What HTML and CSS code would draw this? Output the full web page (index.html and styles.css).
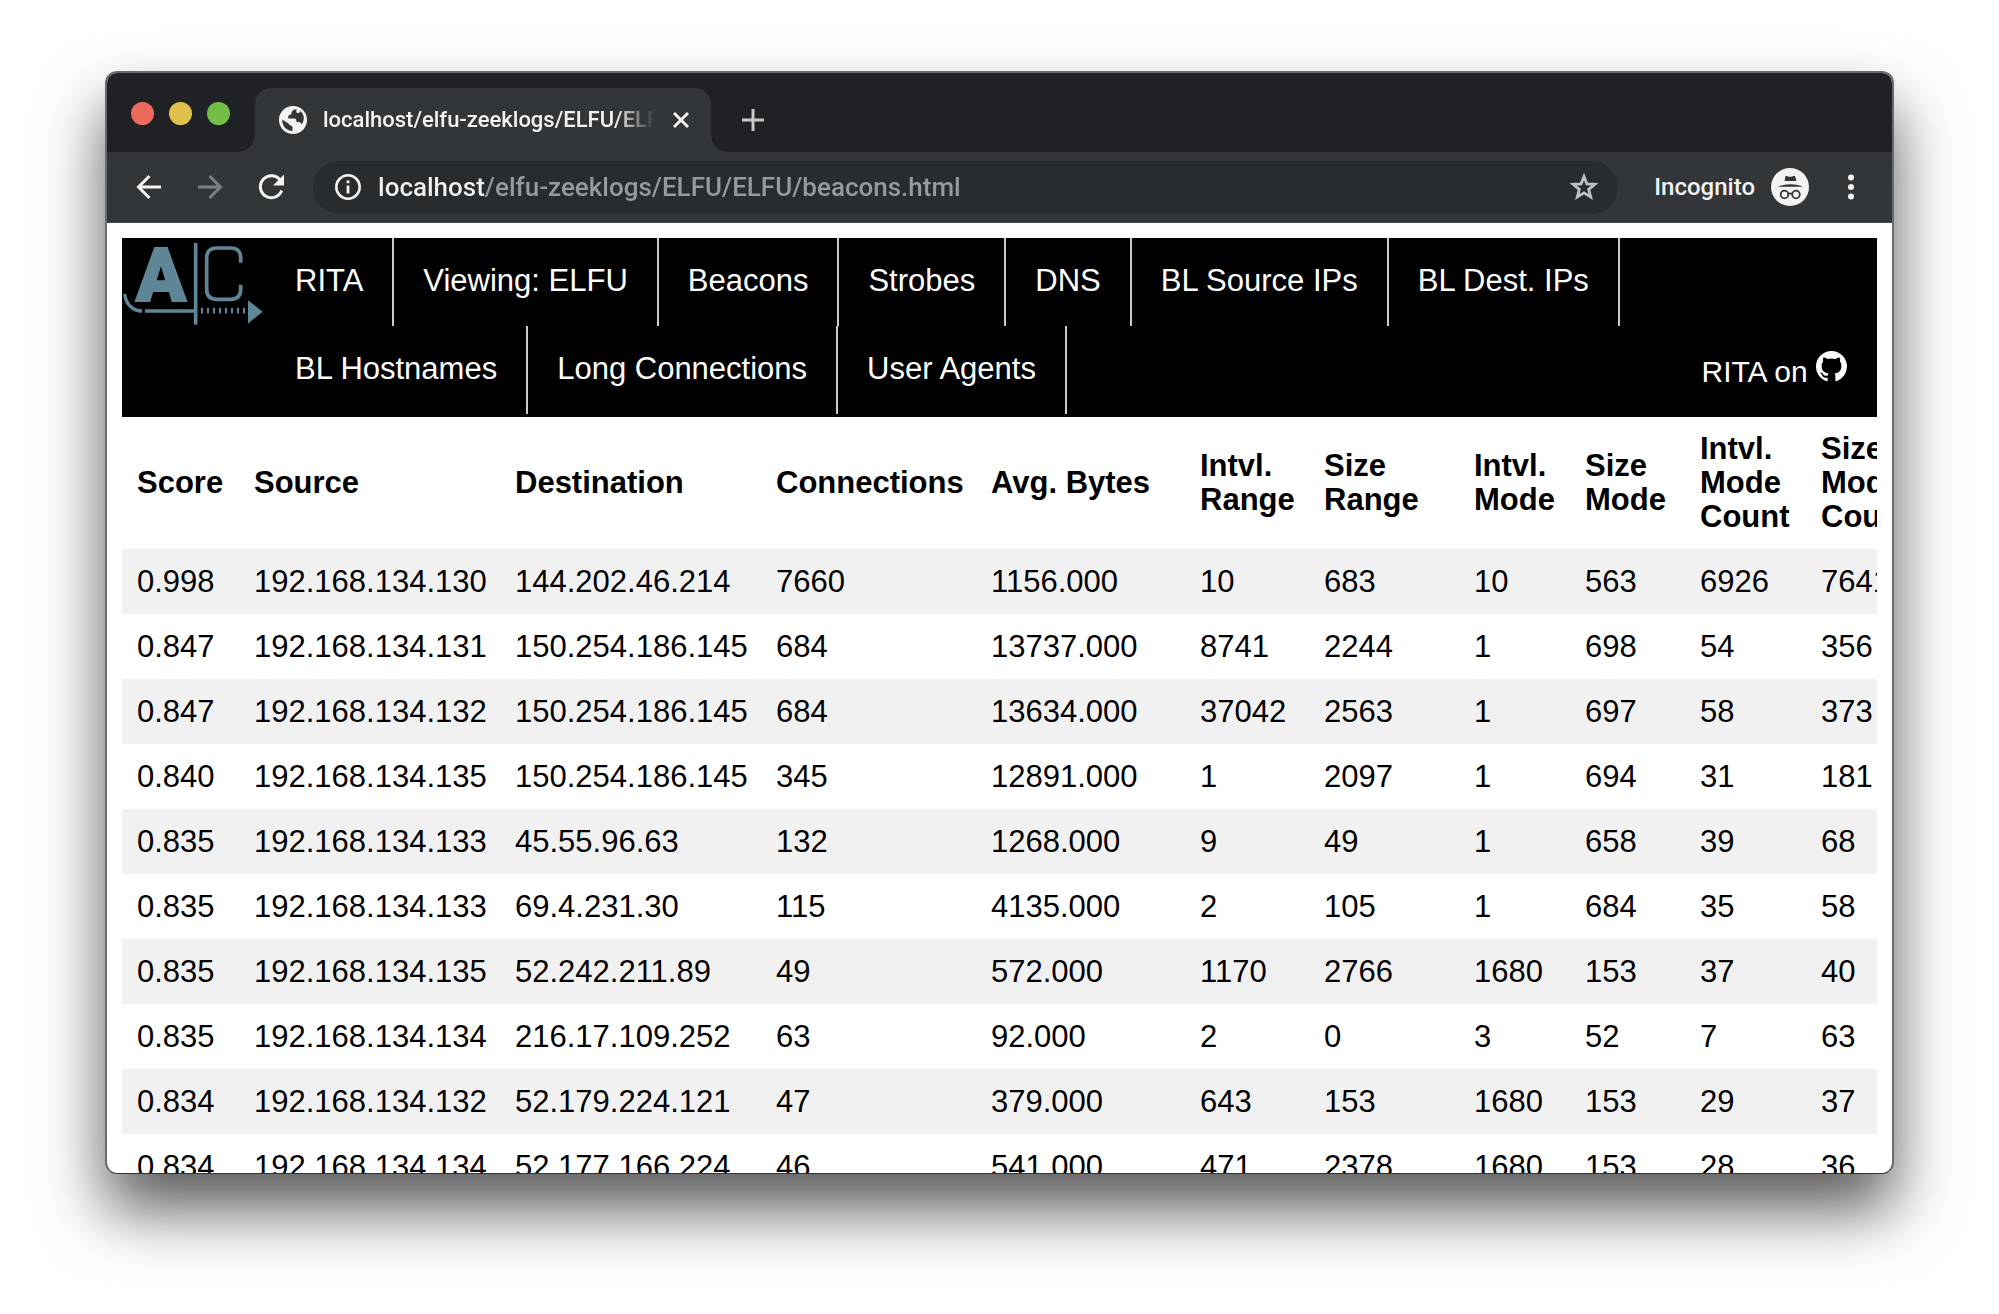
FILE: index.html
```html
<!DOCTYPE html>
<html lang="en">
<head>
<meta charset="utf-8">
<title>localhost/elfu-zeeklogs/ELFU/ELFU/beacons.html</title>
<link rel="stylesheet" href="styles.css">
</head>
<body>
<div class="window">
  <header class="tabstrip">
    <div class="lights">
      <button class="light light-red" aria-label="Close window"></button>
      <button class="light light-yellow" aria-label="Minimize window"></button>
      <button class="light light-green" aria-label="Zoom window"></button>
    </div>
    <div class="tab">
      <svg class="favicon" viewBox="0 0 28 28" aria-hidden="true">
        <circle cx="14" cy="14" r="14" fill="#f1f3f4"/>
        <path d="M15 3.500C13 5 12 6.500 12.500 8L9.500 9.500L9 12.500H15.500C17 12.500 17.500 14 17.500 16H20C21.500 16 22 17 22.500 18.500C26 14 25.500 8 21 5C20.500 7.500 18.500 7.500 17.500 6.500C17 5.500 17.500 4.500 18 3.500Z" fill="#323639"/>
        <path d="M3.200 13.500L9.500 17.500C10.500 18.500 10.500 19.500 12.500 19.800C13.500 20 13.500 22 13.500 25C7.500 25 3 20 3.200 13.500Z" fill="#323639"/>
      </svg>
      <span class="tab-title">localhost/elfu-zeeklogs/ELFU/ELFU/beacons.html</span>
      <button class="icon-button" aria-label="Close tab">
        <svg width="16" height="18" viewBox="0 0 16 18"><path d="M1 2L15 16M15 2L1 16" stroke="#f1f3f4" stroke-width="3" fill="none"/></svg>
      </button>
    </div>
    <button class="icon-button new-tab" aria-label="New tab">
      <svg width="24" height="24" viewBox="0 0 24 24"><path d="M12 1V23M1 12H23" stroke="#c6c8ca" stroke-width="3" fill="none"/></svg>
    </button>
  </header>
  <div class="toolbar">
    <div class="history">
      <button class="icon-button" aria-label="Back">
        <svg width="26" height="26" viewBox="0 0 26 26"><path d="M25 13H3M13.500 2L2.500 13L13.500 24" stroke="#f1f3f4" stroke-width="3" fill="none"/></svg>
      </button>
      <button class="icon-button" aria-label="Forward">
        <svg width="26" height="26" viewBox="0 0 26 26"><path d="M1 13H23M12.500 2L23.500 13L12.500 24" stroke="#7d8082" stroke-width="3" fill="none"/></svg>
      </button>
      <button class="icon-button" aria-label="Reload">
        <svg width="26" height="26" viewBox="0 0 26 26"><path d="M22.500 6.500A11 11 0 1 0 23.700 16.500" stroke="#f1f3f4" stroke-width="3" fill="none"/><path d="M26 .5V11.500H15Z" fill="#f1f3f4"/></svg>
      </button>
    </div>
    <div class="omnibox">
      <svg width="26" height="26" viewBox="0 0 26 26" aria-hidden="true"><circle cx="13" cy="13" r="11.700" fill="none" stroke="#f1f3f4" stroke-width="2.600"/><path d="M13 11.500V19.500M13 6.500V9.300" stroke="#f1f3f4" stroke-width="2.800"/></svg>
      <input class="url" type="text" aria-label="Address" value="localhost/elfu-zeeklogs/ELFU/ELFU/beacons.html">
      <button class="icon-button" aria-label="Bookmark this page">
        <svg width="28" height="28" viewBox="0 0 28 28"><path d="M14 3.500L16.900 10.800L24.800 11.300L18.700 16.300L20.700 24L14 19.800L7.300 24L9.300 16.300L3.200 11.300L11.100 10.800Z" fill="none" stroke="#bfc2c5" stroke-width="2.800"/></svg>
      </button>
    </div>
    <button class="profile">
      <span>Incognito</span>
      <svg width="38" height="38" viewBox="0 0 38 38" aria-hidden="true">
        <circle cx="19" cy="19" r="19" fill="#f1f3f4"/>
        <path d="M14.500 8C16 7.600 17 8.700 19 8.700S22.500 7.600 24 8L25.500 13H13.500Z" fill="#323639"/>
        <path d="M7 18.800C10 17 14 16.200 19.500 16.200S29 17 32 18.800Z" fill="#323639"/>
        <circle cx="13.500" cy="26.500" r="3.800" fill="none" stroke="#323639" stroke-width="1.800"/>
        <circle cx="25" cy="26.500" r="3.800" fill="none" stroke="#323639" stroke-width="1.800"/>
        <path d="M17 26Q19.200 24.800 21.500 26" fill="none" stroke="#323639" stroke-width="1.600"/>
      </svg>
    </button>
    <button class="icon-button menu" aria-label="Menu">
      <svg width="8" height="26" viewBox="0 0 8 26"><g fill="#f1f3f4"><circle cx="4" cy="3.500" r="3"/><circle cx="4" cy="13" r="3"/><circle cx="4" cy="22.500" r="3"/></g></svg>
    </button>
  </div>
  <main class="page">
    <nav class="navbar">
      <a class="logo" href="#" aria-label="Active Countermeasures">
        <svg width="142" height="88" viewBox="36 24 426 264" aria-hidden="true">
          <text x="78" y="213" class="logo-letter">A</text>
          <g fill="none" stroke="#5f8697">
            <path d="M257 39V284" stroke-width="11"/>
            <path d="M392 98V84Q392 54 362 54H320Q290 54 290 84V178Q290 208 320 208H362Q392 208 392 178V164" stroke-width="11"/>
            <path d="M44 192C47 222 68 243 96 243M105 243H257" stroke-width="10"/>
            <path d="M273 242H406" stroke-width="17" stroke-dasharray="6 12"/>
          </g>
          <path d="M414 211V281L458 245Z" fill="#5f8697"/>
        </svg>
      </a>
      <ul class="links">
        <li><a href="#">RITA</a></li>
        <li><a href="#">Viewing: ELFU</a></li>
        <li><a href="#">Beacons</a></li>
        <li><a href="#">Strobes</a></li>
        <li><a href="#">DNS</a></li>
        <li><a href="#">BL Source IPs</a></li>
        <li><a href="#">BL Dest. IPs</a></li>
        <li><a href="#">BL Hostnames</a></li>
        <li><a href="#">Long Connections</a></li>
        <li><a href="#">User Agents</a></li>
      </ul>
      <a class="github" href="#">RITA on
        <svg class="github-mark" width="31" height="31" viewBox="0 0 16 16" aria-label="GitHub"><path fill="#fff" d="M8 0C3.580 0 0 3.580 0 8c0 3.540 2.290 6.530 5.470 7.590.4.070.55-.17.55-.38 0-.19-.01-.82-.01-1.490-2.010.37-2.530-.49-2.690-.94-.09-.23-.48-.94-.82-1.130-.28-.15-.68-.52-.01-.53.63-.01 1.080.58 1.230.82.72 1.210 1.870.87 2.330.66.07-.52.28-.87.51-1.070-1.780-.2-3.640-.89-3.640-3.950 0-.87.31-1.590.82-2.150-.08-.2-.36-1.020.08-2.120 0 0 .67-.21 2.200.82.64-.18 1.320-.27 2-.27s1.360.09 2 .27c1.530-1.040 2.200-.82 2.200-.82.44 1.100.16 1.920.08 2.120.51.56.82 1.270.82 2.150 0 3.070-1.870 3.750-3.650 3.950.29.25.54.73.54 1.480 0 1.070-.01 1.930-.01 2.200 0 .21.15.46.55.38A8.010 8.010 0 0 0 16 8c0-4.420-3.580-8-8-8z"/></svg>
      </a>
    </nav>
    <div class="table-wrap">
      <table class="beacons">
        <colgroup>
          <col class="c-score"><col class="c-ip"><col class="c-ip"><col class="c-conn"><col class="c-bytes"><col class="c-small"><col class="c-size"><col class="c-mode"><col class="c-mode2"><col class="c-count"><col class="c-size">
        </colgroup>
        <thead>
          <tr><th>Score</th><th>Source</th><th>Destination</th><th>Connections</th><th>Avg. Bytes</th><th>Intvl.<br>Range</th><th>Size<br>Range</th><th>Intvl.<br>Mode</th><th>Size<br>Mode</th><th>Intvl.<br>Mode<br>Count</th><th>Size<br>Mode<br>Count</th></tr>
        </thead>
        <tbody>
          <tr><td>0.998</td><td>192.168.134.130</td><td>144.202.46.214</td><td>7660</td><td>1156.000</td><td>10</td><td>683</td><td>10</td><td>563</td><td>6926</td><td>7641</td></tr>
          <tr><td>0.847</td><td>192.168.134.131</td><td>150.254.186.145</td><td>684</td><td>13737.000</td><td>8741</td><td>2244</td><td>1</td><td>698</td><td>54</td><td>356</td></tr>
          <tr><td>0.847</td><td>192.168.134.132</td><td>150.254.186.145</td><td>684</td><td>13634.000</td><td>37042</td><td>2563</td><td>1</td><td>697</td><td>58</td><td>373</td></tr>
          <tr><td>0.840</td><td>192.168.134.135</td><td>150.254.186.145</td><td>345</td><td>12891.000</td><td>1</td><td>2097</td><td>1</td><td>694</td><td>31</td><td>181</td></tr>
          <tr><td>0.835</td><td>192.168.134.133</td><td>45.55.96.63</td><td>132</td><td>1268.000</td><td>9</td><td>49</td><td>1</td><td>658</td><td>39</td><td>68</td></tr>
          <tr><td>0.835</td><td>192.168.134.133</td><td>69.4.231.30</td><td>115</td><td>4135.000</td><td>2</td><td>105</td><td>1</td><td>684</td><td>35</td><td>58</td></tr>
          <tr><td>0.835</td><td>192.168.134.135</td><td>52.242.211.89</td><td>49</td><td>572.000</td><td>1170</td><td>2766</td><td>1680</td><td>153</td><td>37</td><td>40</td></tr>
          <tr><td>0.835</td><td>192.168.134.134</td><td>216.17.109.252</td><td>63</td><td>92.000</td><td>2</td><td>0</td><td>3</td><td>52</td><td>7</td><td>63</td></tr>
          <tr><td>0.834</td><td>192.168.134.132</td><td>52.179.224.121</td><td>47</td><td>379.000</td><td>643</td><td>153</td><td>1680</td><td>153</td><td>29</td><td>37</td></tr>
          <tr><td>0.834</td><td>192.168.134.134</td><td>52.177.166.224</td><td>46</td><td>541.000</td><td>471</td><td>2378</td><td>1680</td><td>153</td><td>28</td><td>36</td></tr>
        </tbody>
      </table>
    </div>
  </main>
</div>
</body>
</html>
```

FILE: styles.css
```css
* {
  box-sizing: border-box;
}

body {
  margin: 0;
  padding: 71px 105px 140px;
  min-height: 100vh;
  background: #fff;
  font-family: "Liberation Sans", Arial, sans-serif;
  font-size: 31px;
  color: #000;
}

button {
  padding: 0;
  border: 0;
  background: none;
  font: inherit;
  color: inherit;
}

a {
  color: inherit;
  text-decoration: none;
}

svg {
  display: block;
  flex: none;
}

.window {
  display: flex;
  flex-direction: column;
  height: calc(100vh - 211px);
  overflow: hidden;
  border: 2px solid #696a6c;
  border-bottom: 1px solid #333;
  border-radius: 12px;
  background: #fff;
  box-shadow: 0 36px 64px rgba(0, 0, 0, 0.65);
}

/* Browser chrome */

.tabstrip {
  display: flex;
  flex: none;
  align-items: flex-end;
  height: 79px;
  background: #202124;
  font-family: Roboto, sans-serif;
  font-weight: 500;
}

.lights {
  display: flex;
  align-items: center;
  gap: 15px;
  height: 79px;
  padding: 2px 25px 0 24px;
}

.light {
  width: 23px;
  height: 23px;
  border-radius: 50%;
}

.light-red { background: #ed6a5e; }
.light-yellow { background: #e0c04c; }
.light-green { background: #72be47; }

.tab {
  position: relative;
  display: flex;
  align-items: center;
  width: 456px;
  height: 64px;
  padding: 0 22px 0 24px;
  border-radius: 16px 16px 0 0;
  background: #323639;
  color: #f1f3f4;
}

.tab::before,
.tab::after {
  content: "";
  position: absolute;
  bottom: 0;
  width: 16px;
  height: 16px;
}

.tab::before {
  right: 100%;
  background: radial-gradient(circle at 0 0, transparent 15px, #323639 16px);
}

.tab::after {
  left: 100%;
  background: radial-gradient(circle at 100% 0, transparent 15px, #323639 16px);
}

.favicon {
  width: 28px;
  height: 28px;
}

.tab-title {
  flex: 1;
  overflow: hidden;
  margin: 0 18px 0 16px;
  font-size: 22px;
  line-height: 32px;
  white-space: nowrap;
  mask-image: linear-gradient(to right, #000 calc(100% - 40px), transparent);
}

.icon-button {
  flex: none;
}

.new-tab {
  height: 64px;
  margin-left: 30px;
}

.toolbar {
  display: flex;
  flex: none;
  align-items: center;
  height: 71px;
  padding: 0 37px 0 29px;
  border-bottom: 1px solid #4b4e50;
  background: #323639;
  color: #f1f3f4;
  font-family: Roboto, sans-serif;
  font-weight: 500;
}

.history {
  display: flex;
  gap: 35px;
  margin-right: 29px;
}

.omnibox {
  display: flex;
  flex: 1;
  align-items: center;
  gap: 17px;
  height: 53px;
  padding: 0 20px 0 22px;
  border-radius: 27px;
  background: #282c2f;
}

.url {
  flex: 1;
  min-width: 0;
  padding: 0;
  border: 0;
  outline: 0;
  font: 500 26px/40px Roboto, sans-serif;
  color: transparent;
  background: linear-gradient(to right, #f1f3f4 107px, #979b9e 107px);
  background-clip: text;
}

.profile {
  display: flex;
  align-items: center;
  gap: 16px;
  margin-left: 36px;
  font-size: 24px;
}

.menu {
  margin-left: 38px;
}

/* Report page */

.page {
  flex: 1;
  min-height: 0;
  overflow: hidden;
  padding: 15px 15px 0;
}

.navbar {
  display: flex;
  align-items: flex-start;
  padding-bottom: 3px;
  background: #000;
  color: #fff;
}

.logo {
  padding-right: 2px;
}

.logo-letter {
  font: 900 220px Roboto, sans-serif;
  fill: #5f8697;
  stroke: #5f8697;
  stroke-width: 6px;
}

.links {
  display: flex;
  flex: 1;
  flex-wrap: wrap;
  margin: 0;
  padding: 0;
  list-style: none;
}

.links a {
  display: block;
  padding: 0 29px 2px;
  border-right: 2px solid #ccc;
  line-height: 86px;
}

.github {
  align-self: flex-end;
  padding: 0 30px;
  font-size: 30px;
  line-height: 84px;
}

.github-mark {
  display: inline;
}

.table-wrap {
  overflow: hidden;
}

.beacons {
  width: 100%;
  table-layout: fixed;
  border-collapse: collapse;
}

.beacons th,
.beacons td {
  padding: 0 0 0 15px;
  text-align: left;
  line-height: 34px;
  white-space: nowrap;
}

.beacons th { height: 132px; }
.beacons td { height: 65px; }

.beacons tbody tr:nth-child(odd) {
  background: #f1f1f1;
}

.c-score { width: 117px; }
.c-ip { width: 261px; }
.c-conn { width: 215px; }
.c-bytes { width: 209px; }
.c-small { width: 124px; }
.c-size { width: 150px; }
.c-mode { width: 111px; }
.c-mode2 { width: 115px; }
.c-count { width: 121px; }
```
